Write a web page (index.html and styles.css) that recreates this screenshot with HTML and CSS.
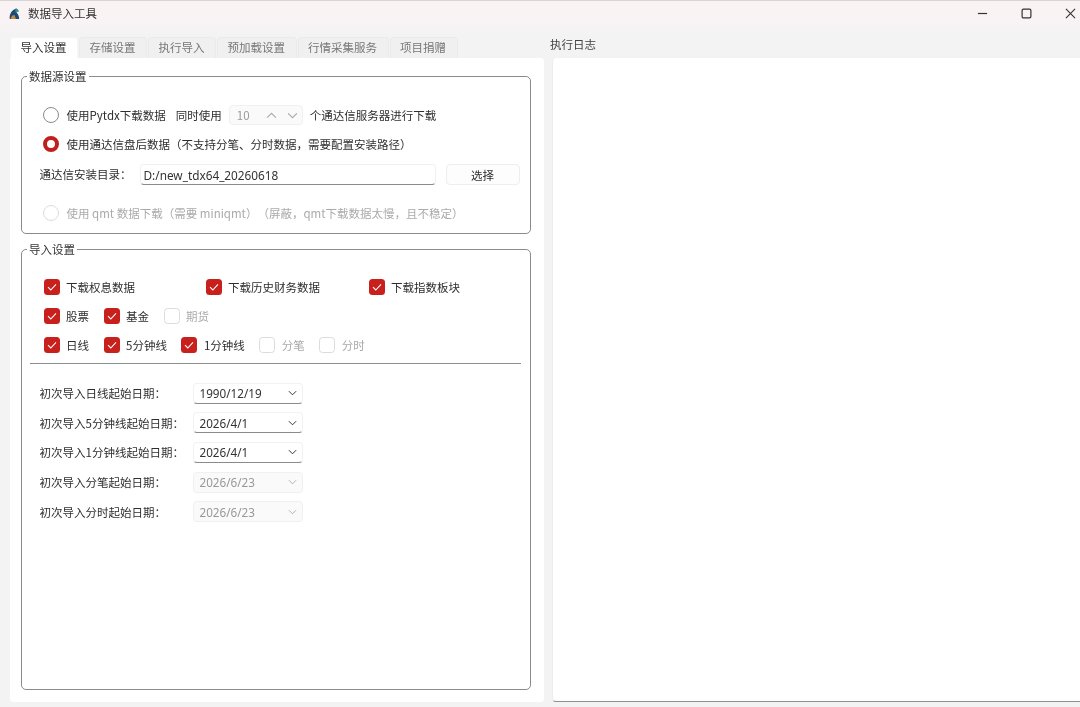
FILE: index.html
```html
<!DOCTYPE html>
<html lang="zh-CN">
<head>
<meta charset="utf-8">
<title>数据导入工具</title>
<link rel="stylesheet" href="styles.css">
</head>
<body>
<div class="window">
  <header class="titlebar">
    <svg class="app-icon" viewBox="0 0 14 14"><path d="M2 13C1 8 4 3 9 1.5c1 .5 2 1.500 2.500 3L9 6c2 1.500 3 4 3 7z" fill="#1b4a78"/><path d="M8 1.500c1.500 0 3 1.500 3.500 3L8 6z" fill="#2f9c95"/><path d="M3 13c0-3 2-4.500 4-4.500L8.500 13z" fill="#c98a3e"/></svg>
    <span class="app-title">数据导入工具</span>
    <div class="win-controls">
      <svg class="win-btn" viewBox="0 0 12 12"><path d="M1 6h10" stroke="#333" stroke-width="1.300" fill="none"/></svg>
      <svg class="win-btn" viewBox="0 0 12 12"><rect x="1.200" y="1.200" width="9.600" height="9.600" rx="1.500" stroke="#333" stroke-width="1.300" fill="none"/></svg>
      <svg class="win-btn" viewBox="0 0 12 12"><path d="M1 1l10 10M11 1L1 11" stroke="#333" stroke-width="1.200" fill="none"/></svg>
    </div>
  </header>
  <main class="content">
    <section class="left">
      <nav class="tabs">
        <span class="tab active">导入设置</span>
        <span class="tab">存储设置</span>
        <span class="tab">执行导入</span>
        <span class="tab">预加载设置</span>
        <span class="tab">行情采集服务</span>
        <span class="tab">项目捐赠</span>
      </nav>
      <div class="panel">
        <div class="group group-source">
          <span class="legend">数据源设置</span>
          <div class="row row-radio1">
            <span class="radio"></span><span class="lbl">使用Pytdx下载数据</span>
            <span class="lbl sim">同时使用</span>
            <span class="spin"><span>10</span>
              <svg class="chev up" viewBox="0 0 10 6"><path d="M1 5l4-4 4 4" fill="none" stroke="#aaa" stroke-width="1"/></svg>
              <svg class="chev" viewBox="0 0 10 6"><path d="M1 1l4 4 4-4" fill="none" stroke="#aaa" stroke-width="1"/></svg>
            </span>
            <span class="lbl after-spin">个通达信服务器进行下载</span>
          </div>
          <div class="row row-radio2">
            <span class="radio on"></span><span class="lbl">使用通达信盘后数据（不支持分笔、分时数据，需要配置安装路径）</span>
          </div>
          <div class="row row-path">
            <span class="lbl path-label">通达信安装目录：</span>
            <span class="input">D:/new_tdx64_20260618</span>
            <span class="button">选择</span>
          </div>
          <div class="row row-radio3">
            <span class="radio off"></span><span class="lbl dim">使用 qmt 数据下载（需要 miniqmt）（屏蔽，qmt下载数据太慢，且不稳定）</span>
          </div>
        </div>
        <div class="group group-import">
          <span class="legend">导入设置</span>
          <div class="checks three">
            <label class="check"><svg class="box" viewBox="0 0 16 16"><rect width="16" height="16" rx="3.500" fill="#c8201c"/><path d="M4 8.200l2.800 2.800L12 5.400" fill="none" stroke="#fff" stroke-width="1.100"/></svg>下载权息数据</label>
            <label class="check"><svg class="box" viewBox="0 0 16 16"><rect width="16" height="16" rx="3.500" fill="#c8201c"/><path d="M4 8.200l2.800 2.800L12 5.400" fill="none" stroke="#fff" stroke-width="1.100"/></svg>下载历史财务数据</label>
            <label class="check"><svg class="box" viewBox="0 0 16 16"><rect width="16" height="16" rx="3.500" fill="#c8201c"/><path d="M4 8.200l2.800 2.800L12 5.400" fill="none" stroke="#fff" stroke-width="1.100"/></svg>下载指数板块</label>
          </div>
          <div class="checks">
            <label class="check"><svg class="box" viewBox="0 0 16 16"><rect width="16" height="16" rx="3.500" fill="#c8201c"/><path d="M4 8.200l2.800 2.800L12 5.400" fill="none" stroke="#fff" stroke-width="1.100"/></svg>股票</label>
            <label class="check"><svg class="box" viewBox="0 0 16 16"><rect width="16" height="16" rx="3.500" fill="#c8201c"/><path d="M4 8.200l2.800 2.800L12 5.400" fill="none" stroke="#fff" stroke-width="1.100"/></svg>基金</label>
            <label class="check dim"><span class="box empty"></span>期货</label>
          </div>
          <div class="checks">
            <label class="check"><svg class="box" viewBox="0 0 16 16"><rect width="16" height="16" rx="3.500" fill="#c8201c"/><path d="M4 8.200l2.800 2.800L12 5.400" fill="none" stroke="#fff" stroke-width="1.100"/></svg>日线</label>
            <label class="check"><svg class="box" viewBox="0 0 16 16"><rect width="16" height="16" rx="3.500" fill="#c8201c"/><path d="M4 8.200l2.800 2.800L12 5.400" fill="none" stroke="#fff" stroke-width="1.100"/></svg>5分钟线</label>
            <label class="check"><svg class="box" viewBox="0 0 16 16"><rect width="16" height="16" rx="3.500" fill="#c8201c"/><path d="M4 8.200l2.800 2.800L12 5.400" fill="none" stroke="#fff" stroke-width="1.100"/></svg>1分钟线</label>
            <label class="check dim"><span class="box empty"></span>分笔</label>
            <label class="check dim"><span class="box empty"></span>分时</label>
          </div>
          <hr class="sep">
          <div class="dates">
            <div class="date-row"><span class="lbl date-label">初次导入日线起始日期：</span><span class="combo">1990/12/19<svg class="chev" viewBox="0 0 10 6"><path d="M1 1l4 4 4-4" fill="none" stroke="#333" stroke-width="1.100"/></svg></span></div>
            <div class="date-row"><span class="lbl date-label">初次导入5分钟线起始日期：</span><span class="combo">2026/4/1<svg class="chev" viewBox="0 0 10 6"><path d="M1 1l4 4 4-4" fill="none" stroke="#333" stroke-width="1.100"/></svg></span></div>
            <div class="date-row"><span class="lbl date-label">初次导入1分钟线起始日期：</span><span class="combo">2026/4/1<svg class="chev" viewBox="0 0 10 6"><path d="M1 1l4 4 4-4" fill="none" stroke="#333" stroke-width="1.100"/></svg></span></div>
            <div class="date-row"><span class="lbl date-label">初次导入分笔起始日期：</span><span class="combo off">2026/6/23<svg class="chev" viewBox="0 0 10 6"><path d="M1 1l4 4 4-4" fill="none" stroke="#aaa" stroke-width="1"/></svg></span></div>
            <div class="date-row"><span class="lbl date-label">初次导入分时起始日期：</span><span class="combo off">2026/6/23<svg class="chev" viewBox="0 0 10 6"><path d="M1 1l4 4 4-4" fill="none" stroke="#aaa" stroke-width="1"/></svg></span></div>
          </div>
        </div>
      </div>
    </section>
    <section class="right">
      <div class="log-title">执行日志</div>
      <div class="log"></div>
    </section>
  </main>
</div>
</body>
</html>
```

FILE: styles.css
```css
* { box-sizing: border-box; }
html, body { margin: 0; padding: 0; }
body {
  width: 1080px;
  height: 707px;
  overflow: hidden;
  background: #f3f3f3;
  font-family: "Noto Sans CJK SC", "Noto Sans", sans-serif;
  font-size: 11.5px;
  color: #2e2e2e;
  text-spacing-trim: space-all;
}
.window {
  width: 1080px;
  height: 707px;
  display: flex;
  flex-direction: column;
  border-top: 1px solid #d8d4d6;
  background: linear-gradient(180deg, #faf3f3 0, #f8f3f4 22px, #f3f3f3 36px);
  filter: blur(0.5px);
}
.titlebar {
  height: 36px;
  flex: none;
  display: flex;
  align-items: center;
  padding: 0 0 12px 8px;
}
.app-icon { width: 13px; height: 13px; margin-right: 7px; }
.app-title { font-size: 11.5px; color: #333; }
.win-controls { margin-left: auto; display: flex; gap: 33px; padding-right: 4px; }
.win-btn { width: 11px; height: 11px; }
.content { flex: 1; display: flex; padding-left: 10px; min-height: 0; }
.left { width: 534px; flex: none; display: flex; flex-direction: column; padding-bottom: 5px; }
.tabs { height: 21px; flex: none; display: flex; gap: 1px; }
.tab {
  height: 21px;
  padding: 0 10.5px 2px 9.5px;
  display: flex;
  align-items: center;
  background: #f0f0f0;
  border: 1px solid #eaeaea;
  border-bottom: 0;
  border-radius: 4px 4px 0 0;
  color: #777;
}
.tab.active { background: #fff; color: #333; border-color: #f5f5f5; }
.panel {
  flex: 1;
  background: #fff;
  border-radius: 0 4px 4px 4px;
  padding: 18px 13px 12px 11px;
  display: flex;
  flex-direction: column;
  gap: 15px;
}
.group {
  position: relative;
  border: 1.5px solid #8b8b8b;
  border-radius: 5px;
}
.legend {
  position: absolute;
  top: -9px;
  left: 5px;
  padding: 0 2px;
  line-height: 16px;
  background: #fff;
  color: #333;
}
.group-source { height: 158px; flex: none; padding: 0 10px 0 20.5px; }
.group-import { flex: 1; padding: 29px 9px 0 20.5px; }
.row { display: flex; align-items: center; height: 20px; }
.row-radio1 { margin-top: 28px; }
.row-radio2 { margin-top: 9px; }
.row-path { margin-top: 10px; margin-left: -3px; height: 21px; }
.row-radio3 { margin-top: 18px; }
.radio {
  width: 16px;
  height: 16px;
  flex: none;
  border-radius: 50%;
  border: 1.5px solid #8a8a8a;
  margin-right: 8px;
  background: #fff;
}
.radio.on { border: 4px solid #c0201c; }
.radio.off { border-color: #ddd; }
.lbl { white-space: nowrap; }
.path-label { margin-top: -2px; }
.sim { margin-left: 10px; }
.spin {
  width: 74px;
  height: 20px;
  margin-left: 7px;
  margin-right: 7px;
  padding-left: 7px;
  display: flex;
  align-items: center;
  background: #fafafa;
  border: 1px solid #f0f0f0;
  border-radius: 4px;
  color: #999;
}
.chev { width: 9px; height: 6px; flex: none; }
.spin .chev { width: 11px; height: 7px; margin-left: 10px; margin-right: 4px; }
.spin .up { margin-left: auto; margin-right: 0; }
.dim { color: #aaa; }
.path-label { width: 100px; flex: none; }
.input {
  width: 296px;
  height: 21px;
  flex: none;
  padding-left: 3px;
  display: flex;
  align-items: center;
  font-family: "Noto Sans", sans-serif;
  font-size: 11.8px;
  color: #333;
  background: #fff;
  border: 1px solid #f0f0f0;
  border-bottom: 1.5px solid #8a8a8a;
  border-radius: 4px;
}
.button {
  width: 74px;
  height: 21px;
  margin-left: 10px;
  flex: none;
  display: flex;
  align-items: center;
  justify-content: center;
  background: #fdfdfd;
  border: 1px solid #eeeeee;
  border-radius: 4px;
}
.checks { display: flex; align-items: center; gap: 14.5px; height: 16px; margin: 0 0 13px 1px; }
.checks.three { display: grid; grid-template-columns: 162px 163px auto; gap: 0; }
.check { display: flex; align-items: center; white-space: nowrap; }
.box { width: 16px; height: 16px; flex: none; margin-right: 6.5px; }
.box.empty { display: block; border: 1px solid #dcdcdc; border-radius: 3.5px; background: #fff; }
.sep { height: 1px; margin: -3px 0 0 -13px; border: 0; background: #8f8f8f; }
.dates { display: flex; flex-direction: column; gap: 8.7px; margin: 18.5px 0 0 -3px; }
.date-row { display: flex; align-items: center; height: 21px; }
.date-label { width: 153px; flex: none; }
.combo {
  width: 110px;
  height: 21px;
  padding: 0 5px 0 6px;
  display: flex;
  align-items: center;
  justify-content: space-between;
  font-family: "Noto Sans", sans-serif;
  font-size: 11.7px;
  color: #333;
  background: #fff;
  border: 1px solid #f2f2f2;
  border-bottom: 1.5px solid #8a8a8a;
  border-radius: 4px;
}
.combo.off { background: #fafafa; border: 1px solid #f0f0f0; color: #999; }
.right { flex: 1; display: flex; flex-direction: column; padding: 0 0 5px 6px; }
.log-title { height: 21px; line-height: 15px; color: #444; }
.log { flex: 1; margin-left: 2px; background: #fff; border-bottom: 1px solid #8f8f8f; border-left: 1px solid #ececec; border-radius: 4px 0 0 4px; }
```
